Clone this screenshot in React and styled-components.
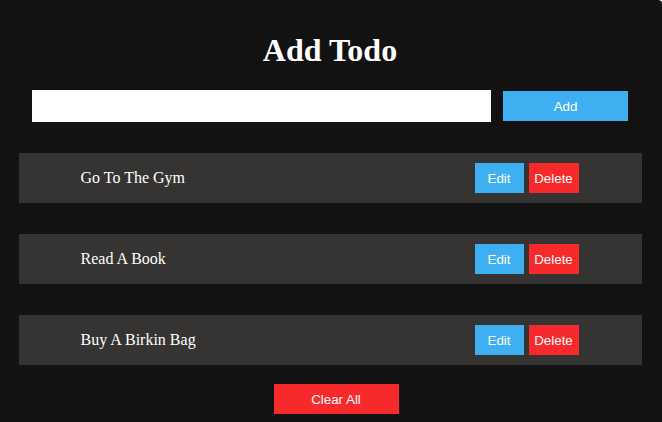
import { useState } from "react";
import { styled, createGlobalStyle } from "styled-components";

const GlobalStyle = createGlobalStyle`
  body {
    margin: 0;
    background: #fff;
    font-family: "Liberation Serif", "Times New Roman", serif;
  }
`;

const Page = styled.main`
  min-height: 100vh;
  box-sizing: border-box;
  background: #121212;
  border-top-right-radius: 4px;
  padding: 11px 2px 8px 0;
  color: #fff;
`;

const Title = styled.h1`
  margin: 21px 0;
  font-size: 32px;
  line-height: 37px;
  text-align: center;
  font-weight: 700;
`;

const Form = styled.form`
  width: 596px;
  margin: 0 auto;
  display: flex;
  align-items: center;
  gap: 12px;
`;

const TextInput = styled.input`
  flex: 1;
  height: 32px;
  box-sizing: border-box;
  border: none;
  outline: 0;
  padding: 0 8px;
  background: #fff;
  font-size: 16px;
`;

const Button = styled.button`
  height: 30px;
  width: ${(props) => props.$width || 50}px;
  padding: 0;
  border: none;
  color: #fff;
  font-family: "Liberation Sans", Arial, sans-serif;
  font-size: 13.33px;
  cursor: pointer;
  background: ${(props) => (props.$danger ? "#f8292b" : "#3eaff0")};
`;

const List = styled.ul`
  list-style: none;
  width: 623px;
  margin: 31px auto 0;
  padding: 0;
  display: flex;
  flex-direction: column;
  gap: 31px;
`;

const Row = styled.li`
  height: 50px;
  padding: 0 63px 0 62px;
  background: #363432;
  display: flex;
  align-items: center;
  justify-content: space-between;
  font-size: 16px;
`;

const Actions = styled.div`
  display: flex;
  gap: 5px;
`;

const Footer = styled.div`
  display: flex;
  justify-content: center;
  margin-top: 19px;
  padding-left: 12px;
`;

export default function App() {
  const [todos, setTodos] = useState([
    "Go To The Gym",
    "Read A Book",
    "Buy A Birkin Bag",
  ]);
  const [text, setText] = useState("");

  const handleSubmit = (event) => {
    event.preventDefault();
    if (!text.trim()) return;
    setTodos([...todos, text]);
    setText("");
  };

  return (
    <>
      <GlobalStyle />
      <Page>
        <Title>Add Todo</Title>
        <Form onSubmit={handleSubmit}>
          <TextInput value={text} onChange={(e) => setText(e.target.value)} />
          <Button type="submit" $width={125}>
            Add
          </Button>
        </Form>
        <List>
          {todos.map((todo, i) => (
            <Row key={i}>
              <span>{todo}</span>
              <Actions>
                <Button $width={49}>Edit</Button>
                <Button $danger onClick={() => setTodos(todos.filter((_, j) => j !== i))}>
                  Delete
                </Button>
              </Actions>
            </Row>
          ))}
        </List>
        <Footer>
          <Button $danger $width={125} onClick={() => setTodos([])}>
            Clear All
          </Button>
        </Footer>
      </Page>
    </>
  );
}
